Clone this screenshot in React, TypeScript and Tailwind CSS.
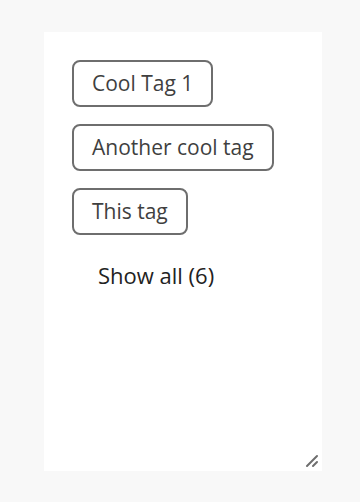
const tags = ["Cool Tag 1", "Another cool tag", "This tag"];

function ResizeHandle() {
  return (
    <svg
      className="absolute bottom-[2px] right-[2px]"
      width="16"
      height="16"
      viewBox="0 0 16 16"
    >
      <path
        d="M3 13 L13 3 M9 13 L13 9"
        stroke="#6e6e6e"
        strokeWidth="2"
        strokeLinecap="round"
        fill="none"
      />
    </svg>
  );
}

export default function App() {
  return (
    <div
      className="h-[502px] w-[360px] bg-[#f8f8f8] pl-[44px] pt-[32px]"
      style={{ fontFamily: '"Open Sans", "Noto Sans", sans-serif' }}
    >
      <div className="relative h-[439px] w-[278px] bg-white p-[28px]">
        <div className="flex flex-col items-start gap-[17px]">
          {tags.map((tag) => (
            <div
              key={tag}
              className="flex h-[47px] items-center rounded-[8px] border-2 border-[#6e6e6e] pl-[18px] pr-[18px] text-[21px] text-[#3f3f3f]"
            >
              {tag}
            </div>
          ))}
        </div>
        <button className="mt-[17px] flex h-[47px] items-center pl-[26px] text-[22px] text-[#222222]">
          Show all (6)
        </button>
        <ResizeHandle />
      </div>
    </div>
  );
}
